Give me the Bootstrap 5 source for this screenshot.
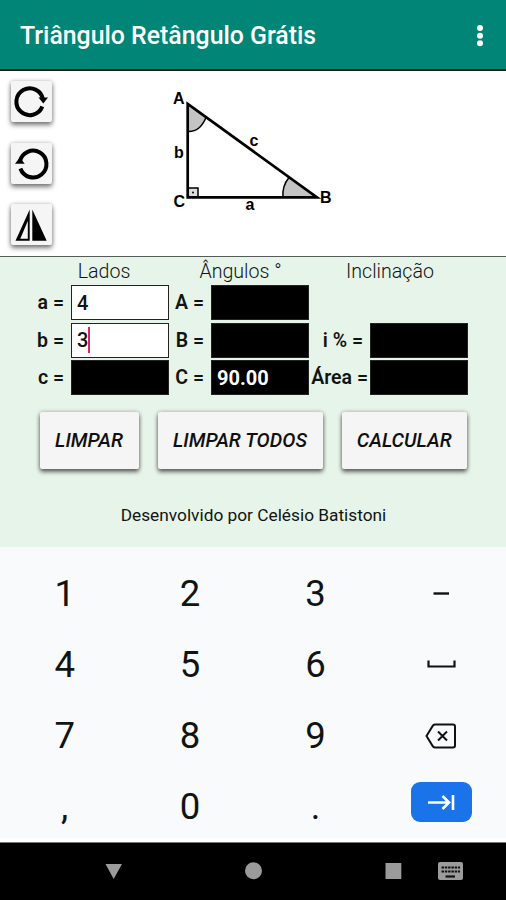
<!DOCTYPE html>
<html lang="pt-BR">
<head>
<meta charset="utf-8">
<meta name="viewport" content="width=device-width, initial-scale=1">
<title>Triângulo Retângulo Grátis</title>
<link href="https://cdn.jsdelivr.net/npm/bootstrap@5.3.0/dist/css/bootstrap.min.css" rel="stylesheet">
<style>
body{font-family:Roboto,"Liberation Sans",sans-serif;color:#101412;width:506px;height:900px;overflow:hidden}
svg{display:block}
.app-bar{height:71px;background:#008577;border-bottom:2px solid #071d1a;padding:2px 20px 0 20px}
.app-title{font-size:24.85px;font-weight:500;line-height:30px;color:#fff}
.menu-btn{width:14px;height:26px;margin-right:-1px}
.figure-panel{height:186px;border-bottom:1.5px solid #555c58;padding:10px 0 0 11px}
.tool-btn{width:41px;height:41px;background:#f5f5f5;border-radius:2px;box-shadow:0 3px 5px rgba(0,0,0,.5),0 0 4px rgba(0,0,0,.22)}
.tool-stack{gap:20.5px}
.triangle-fig{margin-left:108px;margin-top:-1px}
.form-panel{height:290px;background:#e7f4e9}
.heads{height:28px;font-size:19.6px;font-weight:300;line-height:30px;display:grid;grid-template-columns:208px 65px 234px;color:#101412}
.fields{display:grid;grid-template-columns:71px 98px 42px 98px 61px 98px;row-gap:2.5px;grid-auto-rows:35px}
.fields label{font-size:19.5px;font-weight:600;line-height:35px;white-space:nowrap;padding-right:7px}
.fields .tight{padding-right:2px}
.field{background:#000;border:1px solid #222;padding:0 5px;font-size:20px;font-weight:500;line-height:35px}
.caret{width:2px;height:26px;background:#e0245e}
.act{height:57px;background:#f5f5f5;border-radius:2px;font-size:19.7px;font-weight:500;font-style:italic;line-height:24px;color:#101010;box-shadow:0 3px 4px rgba(0,0,0,.55),0 0 4px rgba(0,0,0,.28)}
.act span{display:block;padding-top:2px}
.actions{gap:19px;padding:16.5px 0 0 39.5px}
.w-a{width:99px}.w-b{width:165px}.w-c{width:125.5px}
.credit{font-size:17.3px;line-height:24px;margin-top:34px;padding-left:1px}
.keypad{height:295px;background:#f8fafc;border-bottom:4px solid #fff;padding:11.5px 2px 0;display:grid;grid-template-columns:repeat(4,125.4px);grid-auto-rows:71.2px}
.keypad>div{font-size:36.5px;line-height:1}
.enter{width:61px;height:40px;border-radius:9px;background:#1a73e8;margin:-12px 0 0 1px}
.sys{height:58px;background:#000;border-top:1px solid #777}
</style>
<script src="https://cdn.jsdelivr.net/npm/bootstrap@5.3.0/dist/js/bootstrap.bundle.min.js"></script>
</head>
<body>
<header class="app-bar d-flex align-items-center justify-content-between">
  <h1 class="app-title m-0"><span>Triângulo Retângulo Grátis</span></h1>
  <svg class="menu-btn" viewBox="0 0 14 26" fill="#fff"><circle cx="7" cy="5" r="3"/><circle cx="7" cy="12.700" r="3"/><circle cx="7" cy="20.200" r="3"/></svg>
</header>
<section class="figure-panel bg-white d-flex align-items-start">
  <div class="tool-stack d-flex flex-column">
    <button class="tool-btn border-0 p-0"><svg width="41" height="41" viewBox="0 0 41 41"><path d="M32 18.500A13.400 13.400 0 1 0 31.300 25.500" fill="none" stroke="#000" stroke-width="4"/><path d="M27.500 16.500H37L32.300 22.500z"/></svg></button>
    <button class="tool-btn border-0 p-0"><svg width="41" height="41" viewBox="0 0 41 41"><path d="M8.900 18.500A13.400 13.400 0 1 1 9.400 25.500" fill="none" stroke="#000" stroke-width="4"/><path d="M4 20.800h9.700L8.800 14.500z"/></svg></button>
    <button class="tool-btn border-0 p-0"><svg width="41" height="41" viewBox="0 0 41 41"><path d="M21.300 5.500V36.800h14.400z"/><path fill-rule="evenodd" d="M18.700 5.500V36.800H4.500zM16.800 17V34.800H9.300z"/></svg></button>
  </div>
  <svg class="triangle-fig" width="190" height="140" viewBox="160 80 190 140" font-family="Liberation Sans, Arial, sans-serif" font-weight="700" font-size="16">
    <path d="M188 104V131.500Q200 132 206 117.500Z" fill="#c4c4c4"/>
    <path d="M188 131.500Q200 132 206 117.500" fill="none" stroke="#000" stroke-width="1.500"/>
    <path d="M317 197L289 177.500Q282 186 283 197Z" fill="#c4c4c4"/>
    <path d="M289 177.500Q282 186 283 197" fill="none" stroke="#000" stroke-width="1.500"/>
    <path d="M188 188H198V197H188Z" fill="#ddd" stroke="#000" stroke-width="1.500"/>
    <circle cx="193" cy="192.500" r="1"/>
    <path d="M187.700 104V197.300H317Z" fill="none" stroke="#000" stroke-width="2.700"/>
    <text x="173" y="104">A</text><text x="174" y="157.500">b</text>
    <text x="173.500" y="207">C</text><text x="245.500" y="210">a</text>
    <text x="249.500" y="145.500">c</text><text x="320" y="203">B</text>
  </svg>
</section>
<main class="form-panel">
  <div class="heads"><span class="text-center">Lados</span><span class="d-flex justify-content-center text-nowrap">Ângulos °</span><span class="text-center">Inclinação</span></div>
  <div class="fields">
    <label class="text-end">a =</label><div class="field bg-white">4</div>
    <label class="text-end">A =</label><div class="field"></div>
    <span></span><span></span>
    <label class="text-end">b =</label><div class="field bg-white d-flex align-items-center">3<span class="caret"></span></div>
    <label class="text-end">B =</label><div class="field"></div>
    <label class="text-end">i % =</label><div class="field"></div>
    <label class="text-end">c =</label><div class="field"></div>
    <label class="text-end">C =</label><div class="field text-white fw-bold">90.00</div>
    <label class="text-end tight">Área =</label><div class="field"></div>
  </div>
  <div class="actions d-flex">
    <button class="act w-a border-0 p-0"><span>LIMPAR</span></button>
    <button class="act w-b border-0 p-0"><span>LIMPAR TODOS</span></button>
    <button class="act w-c border-0 p-0"><span>CALCULAR</span></button>
  </div>
  <p class="credit text-center mb-0"><span>Desenvolvido por Celésio Batistoni</span></p>
</main>
<section class="keypad">
  <div class="d-flex align-items-center justify-content-center">1</div>
  <div class="d-flex align-items-center justify-content-center">2</div>
  <div class="d-flex align-items-center justify-content-center">3</div>
  <div class="d-flex align-items-center justify-content-center"><svg width="32" height="26" viewBox="0 0 32 26"><path d="M8.500 12.500H24" stroke="#111" stroke-width="2.400"/></svg></div>
  <div class="d-flex align-items-center justify-content-center">4</div>
  <div class="d-flex align-items-center justify-content-center">5</div>
  <div class="d-flex align-items-center justify-content-center">6</div>
  <div class="d-flex align-items-center justify-content-center"><svg width="32" height="26" viewBox="0 0 32 26"><path d="M3.500 8.500V14.500H29.500V8.500" fill="none" stroke="#111" stroke-width="2.200"/></svg></div>
  <div class="d-flex align-items-center justify-content-center">7</div>
  <div class="d-flex align-items-center justify-content-center">8</div>
  <div class="d-flex align-items-center justify-content-center">9</div>
  <div class="d-flex align-items-center justify-content-center"><svg width="32" height="26" viewBox="0 0 32 26"><path d="M10 1.500H28Q30 1.500 30 3.500V22.500Q30 24.500 28 24.500H10Q9 24.500 8 23.500L1.500 13L8 2.500Q9 1.500 10 1.500ZM13 8.500l9 9M22 8.500l-9 9" fill="none" stroke="#111" stroke-width="2"/></svg></div>
  <div class="d-flex align-items-center justify-content-center">,</div>
  <div class="d-flex align-items-center justify-content-center">0</div>
  <div class="d-flex align-items-center justify-content-center">.</div>
  <div class="d-flex align-items-center justify-content-center"><div class="enter d-flex align-items-center justify-content-center"><svg width="30" height="20" viewBox="0 0 30 20" fill="none" stroke="#fff" stroke-width="2.600"><path d="M2 10.500H22M16.500 4l6.500 6.500-6.500 6.500M27 3V18"/></svg></div></div>
</section>
<footer class="sys"><svg width="506" height="57" viewBox="0 843 506 57" fill="#9b9b9b">
  <path d="M105.500 864H122L113.700 879Z"/><circle cx="253.500" cy="870.800" r="8.500"/><rect x="385.500" y="863" width="15.800" height="16"/>
  <rect x="438" y="862" width="25" height="18" rx="2"/>
  <path d="M441.500 867.500H460M441.500 871.500H460" stroke="#111" stroke-width="2.200" stroke-dasharray="2.500 .800"/><path d="M445.500 876.500H455" stroke="#111" stroke-width="2.200"/>
</svg></footer>
</body>
</html>
